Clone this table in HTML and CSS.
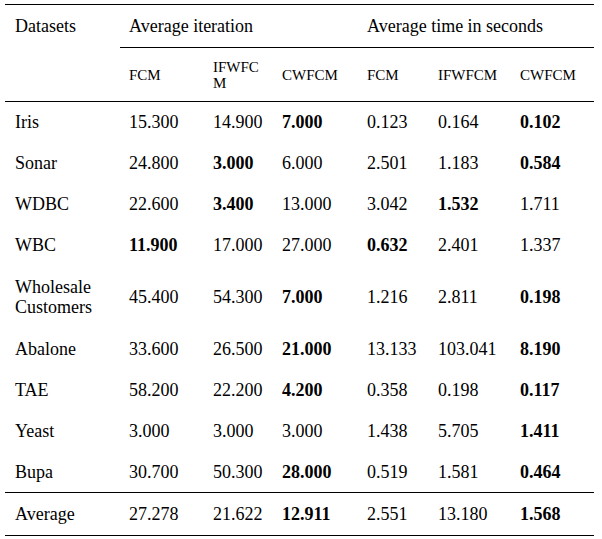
FILE: index.html
```html
<!DOCTYPE html>
<html>
<head>
<meta charset="utf-8">
<link rel="stylesheet" href="styles.css">
</head>
<body>
<table class="results">
  <colgroup>
    <col class="c1"><col class="c2"><col class="c3"><col class="c4"><col class="c5"><col class="c6"><col class="c7">
  </colgroup>
  <thead>
    <tr class="head1">
      <td class="first">Datasets</td>
      <td class="group" colspan="3">Average iteration</td>
      <td class="group" colspan="3">Average time in seconds</td>
    </tr>
    <tr class="head2">
      <td class="first"></td>
      <td>FCM</td>
      <td class="wrap">IFWFCM</td>
      <td>CWFCM</td>
      <td>FCM</td>
      <td>IFWFCM</td>
      <td>CWFCM</td>
    </tr>
  </thead>
  <tbody>
    <tr class="row"><td class="first">Iris</td><td>15.300</td><td>14.900</td><td class="b">7.000</td><td>0.123</td><td>0.164</td><td class="b">0.102</td></tr>
    <tr class="row"><td class="first">Sonar</td><td>24.800</td><td class="b">3.000</td><td>6.000</td><td>2.501</td><td>1.183</td><td class="b">0.584</td></tr>
    <tr class="row"><td class="first">WDBC</td><td>22.600</td><td class="b">3.400</td><td>13.000</td><td>3.042</td><td class="b">1.532</td><td>1.711</td></tr>
    <tr class="row"><td class="first">WBC</td><td class="b">11.900</td><td>17.000</td><td>27.000</td><td class="b">0.632</td><td>2.401</td><td>1.337</td></tr>
    <tr class="row tall"><td class="first">Wholesale Customers</td><td>45.400</td><td>54.300</td><td class="b">7.000</td><td>1.216</td><td>2.811</td><td class="b">0.198</td></tr>
    <tr class="row"><td class="first">Abalone</td><td>33.600</td><td>26.500</td><td class="b">21.000</td><td>13.133</td><td>103.041</td><td class="b">8.190</td></tr>
    <tr class="row"><td class="first">TAE</td><td>58.200</td><td>22.200</td><td class="b">4.200</td><td>0.358</td><td>0.198</td><td class="b">0.117</td></tr>
    <tr class="row"><td class="first">Yeast</td><td>3.000</td><td>3.000</td><td>3.000</td><td>1.438</td><td>5.705</td><td class="b">1.411</td></tr>
    <tr class="row ruled"><td class="first">Bupa</td><td>30.700</td><td>50.300</td><td class="b">28.000</td><td>0.519</td><td>1.581</td><td class="b">0.464</td></tr>
    <tr class="row avg ruled"><td class="first">Average</td><td>27.278</td><td>21.622</td><td class="b">12.911</td><td>2.551</td><td>13.180</td><td class="b">1.568</td></tr>
  </tbody>
</table>
</body>
</html>
```

FILE: styles.css
```css
html, body {
  margin: 0;
  padding: 0;
  background: #fff;
}

body {
  font-family: "Liberation Serif", "Times New Roman", serif;
  font-size: 18px;
  color: #000;
}

.results {
  margin: 4px 0 0 5px;
  width: 589px;
  table-layout: fixed;
  border-collapse: collapse;
  border-top: 1px solid #000;
}

.c1 { width: 115px; }
.c2 { width: 84px; }
.c3 { width: 69px; }
.c4 { width: 85px; }
.c5 { width: 71px; }
.c6 { width: 82px; }
.c7 { width: 83px; }

.results td {
  padding: 0 4px 0 9px;
  line-height: 20px;
  vertical-align: middle;
  text-align: left;
}

.results td.first {
  padding-left: 10px;
}

.head1 { height: 43px; }
.head1 .group { border-bottom: 1px solid #000; }

.head2 {
  height: 54px;
  border-bottom: 1px solid #000;
}

.head2 td {
  font-size: 15px;
  line-height: 16px;
}

.head2 td.wrap {
  word-break: break-all;
  padding-right: 8px;
}

.row { height: 41px; }
.row.tall { height: 63px; }
.row.avg { height: 43px; }
.row.ruled { border-bottom: 1px solid #000; }

.b { font-weight: bold; }
```
